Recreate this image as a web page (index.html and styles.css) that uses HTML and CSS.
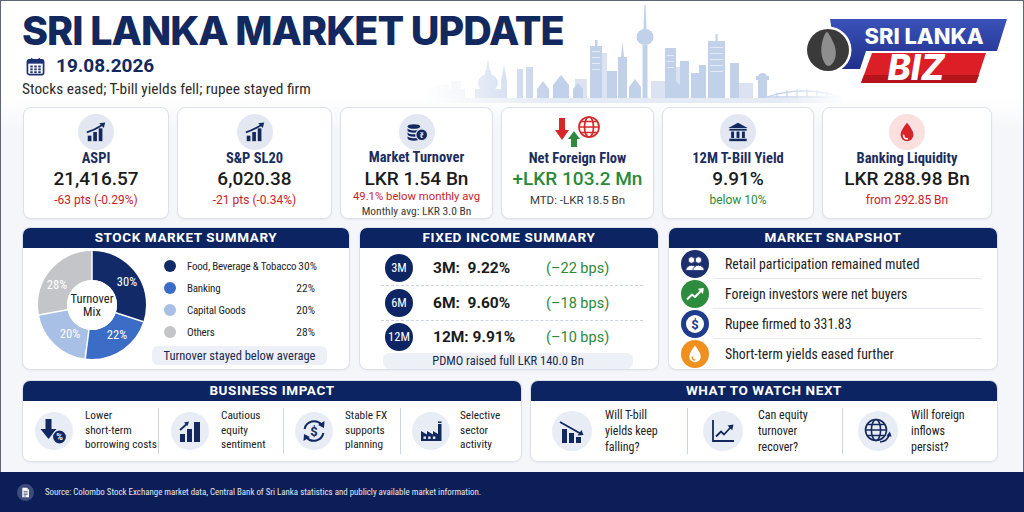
FILE: index.html
```html
<!DOCTYPE html>
<html lang="en">
<head>
<meta charset="utf-8">
<title>Sri Lanka Market Update</title>
<link rel="stylesheet" href="styles.css">
</head>
<body>
<div class="page">
  <header class="hero">
    <svg class="skyline" viewBox="0 0 420 104" aria-hidden="true">
      <defs>
        <linearGradient id="fadeG" x1="0" x2="1" y1="0" y2="0">
          <stop offset="0" stop-color="#000"/>
          <stop offset="0.3" stop-color="#fff"/>
          <stop offset="0.85" stop-color="#fff"/>
          <stop offset="1" stop-color="#000"/>
        </linearGradient>
        <mask id="fadeM"><rect width="420" height="104" fill="url(#fadeG)"/></mask>
      </defs>
      <g mask="url(#fadeM)" opacity="0.8">
        <g fill="#d3ddef">
          <rect x="0" y="88" width="40" height="12"/>
          <rect x="10" y="84" width="14" height="16"/>
          <rect x="26" y="80" width="10" height="20"/>
          <rect x="150" y="78" width="12" height="22"/>
          <rect x="226" y="80" width="14" height="20"/>
          <rect x="312" y="82" width="16" height="18"/>
          <rect x="173" y="52" width="9" height="48"/>
          <rect x="248" y="66" width="9" height="34"/>
        </g>
        <g fill="#b4c6e5">
          <rect x="50" y="88" width="26" height="12"/>
          <ellipse cx="63" cy="82" rx="10" ry="9"/>
          <rect x="60" y="70" width="6" height="6"/>
          <polygon points="61,70 65,70 63,58"/>
          <polygon points="76,100 76,80 79,64 82,80 82,100"/>
          <rect x="92" y="68" width="6" height="32"/>
          <rect x="101" y="66" width="7" height="34"/>
          <polygon points="112,100 112,88 118,80 124,88 124,100"/>
          <polygon points="128,100 128,84 136,74 144,84 144,100"/>
          <polygon points="148,100 148,88 153,82 158,88 158,100"/>
          <rect x="165" y="45" width="12" height="55"/>
          <rect x="170" y="39" width="2.5" height="7"/>
          <rect x="182" y="70" width="10" height="30"/>
          <rect x="193" y="56" width="9" height="44"/>
          <polygon points="196,56 199,56 197.5,40"/>
          <polygon points="204,100 204,86 210,78 216,86 216,100"/>
          <polygon points="219.4,4 220.6,4 221.6,30 218.4,30"/>
          <ellipse cx="220" cy="36" rx="8.5" ry="8"/>
          <rect x="217.5" y="44" width="5" height="56"/>
          <rect x="240" y="47" width="11" height="53"/>
          <rect x="255" y="60" width="9" height="40"/>
          <rect x="266" y="72" width="8" height="28"/>
          <rect x="274" y="64" width="7" height="36"/>
          <rect x="283" y="40" width="17" height="60"/>
          <rect x="290.5" y="33" width="2" height="8"/>
          <rect x="305" y="62" width="9" height="38"/>
          <polygon points="244,100 244,88 251,80 258,88 258,100"/>
          <rect x="333" y="78" width="9" height="20"/>
          <rect x="331" y="75" width="13" height="4"/>
          <ellipse cx="337.5" cy="75" rx="4" ry="3"/>
        </g>
        <g fill="#ffffff" opacity="0.55">
          <rect x="167" y="50" width="8" height="1"/><rect x="167" y="56" width="8" height="1"/><rect x="167" y="62" width="8" height="1"/><rect x="167" y="68" width="8" height="1"/>
          <rect x="285" y="46" width="13" height="1"/><rect x="285" y="52" width="13" height="1"/><rect x="285" y="58" width="13" height="1"/><rect x="285" y="64" width="13" height="1"/><rect x="285" y="70" width="13" height="1"/>
          <rect x="242" y="54" width="7" height="1"/><rect x="242" y="60" width="7" height="1"/><rect x="242" y="66" width="7" height="1"/>
        </g>
        <g fill="none" stroke="#b4c6e5" stroke-width="1.3">
          <path d="M342 96 Q 378 84 416 96"/>
          <path d="M342 96 H418"/>
          <path d="M352 96 V92 M362 96 V89 M372 96 V88 M382 96 V88 M392 96 V89 M402 96 V91"/>
        </g>
        <rect x="0" y="97" width="420" height="5" fill="#dfe7f3"/>
      </g>
    </svg>
    <div class="hero-text">
      <h1 class="title">SRI LANKA MARKET UPDATE</h1>
      <div class="date-row">
        <svg class="cal" viewBox="0 0 20 20" aria-hidden="true">
          <rect x="1.5" y="3" width="17" height="15.5" rx="2" fill="none" stroke="#1c3272" stroke-width="1.8"/>
          <rect x="1.5" y="3" width="17" height="4" fill="#1c3272"/>
          <rect x="5" y="1" width="2" height="4" rx="1" fill="#1c3272"/>
          <rect x="13" y="1" width="2" height="4" rx="1" fill="#1c3272"/>
          <g fill="#1c3272">
            <rect x="4.5" y="9" width="2.6" height="2"/><rect x="8.7" y="9" width="2.6" height="2"/><rect x="12.9" y="9" width="2.6" height="2"/>
            <rect x="4.5" y="12" width="2.6" height="2"/><rect x="8.7" y="12" width="2.6" height="2"/><rect x="12.9" y="12" width="2.6" height="2"/>
            <rect x="4.5" y="15" width="2.6" height="2"/><rect x="8.7" y="15" width="2.6" height="2"/><rect x="12.9" y="15" width="2.6" height="2"/>
          </g>
        </svg>
        <span class="date">19.08.2026</span>
      </div>
      <p class="subtitle">Stocks eased; T-bill yields fell; rupee stayed firm</p>
    </div>
    <svg class="logo" viewBox="0 0 210 76" aria-label="Sri Lanka Biz">
      <defs>
        <linearGradient id="blueG" x1="0" x2="0" y1="0" y2="1">
          <stop offset="0" stop-color="#3a52b8"/>
          <stop offset="1" stop-color="#1f2f8c"/>
        </linearGradient>
      </defs>
      <polygon points="30,5 207,5 197,37 66,37 60,55 38,55" fill="url(#blueG)"/>
      <polygon points="72,39 186,39 176,69 61,69" fill="#dc1f27"/>
      <polygon points="64,61 179,61 176,69 61,69" fill="#b5141b"/>
      <circle cx="28" cy="36" r="23.5" fill="#ffffff"/>
      <circle cx="28" cy="36" r="21" fill="#3a3a3a"/>
      <path d="M26.5 18 C 25 19.5, 23.5 23, 22.5 27 C 20.5 34, 20.5 44, 26 51 C 28 53, 31 52, 33.5 48 C 36.5 43, 36.5 36, 34 30 C 32 25, 29.5 21, 28 18.5 Z" fill="#8e8e8e"/>
      <text x="124" y="30" text-anchor="middle" textLength="119" lengthAdjust="spacingAndGlyphs" class="logo-t1">SRI LANKA</text>
      <text x="116" y="66" text-anchor="middle" class="logo-t2">BIZ</text>
    </svg>
  </header>

  <section class="kpis">
    <div class="kpi">
      <div class="kpi-icon">
        <svg viewBox="0 0 24 24" aria-hidden="true">
          <g fill="#13285e">
            <rect x="3" y="16" width="4" height="6"/>
            <rect x="9" y="12" width="4" height="10"/>
            <rect x="15" y="8" width="4" height="14"/>
            <polygon points="22,1.5 15.5,2.5 20.5,7.5"/>
          </g>
          <path d="M2 12.5 C 8 10.5, 13 8, 19.5 4" fill="none" stroke="#13285e" stroke-width="2"/>
        </svg>
      </div>
      <div class="kpi-title">ASPI</div>
      <div class="kpi-value">21,416.57</div>
      <div class="kpi-sub red">-63 pts (-0.29%)</div>
    </div>
    <div class="kpi">
      <div class="kpi-icon">
        <svg viewBox="0 0 24 24" aria-hidden="true">
          <g fill="#13285e">
            <rect x="3" y="16" width="4" height="6"/>
            <rect x="9" y="12" width="4" height="10"/>
            <rect x="15" y="8" width="4" height="14"/>
            <polygon points="22,1.5 15.5,2.5 20.5,7.5"/>
          </g>
          <path d="M2 12.5 C 8 10.5, 13 8, 19.5 4" fill="none" stroke="#13285e" stroke-width="2"/>
        </svg>
      </div>
      <div class="kpi-title">S&amp;P SL20</div>
      <div class="kpi-value">6,020.38</div>
      <div class="kpi-sub red">-21 pts (-0.34%)</div>
    </div>
    <div class="kpi dense">
      <div class="kpi-icon">
        <svg viewBox="0 0 28 24" aria-hidden="true">
          <g fill="#13285e">
            <ellipse cx="10" cy="5" rx="8" ry="3"/>
            <path d="M2 7 v3 a8 3 0 0 0 16 0 v-3 a8 3 0 0 1 -16 0z"/>
            <path d="M2 12 v3 a8 3 0 0 0 16 0 v-3 a8 3 0 0 1 -16 0z"/>
            <path d="M2 17 v3 a8 3 0 0 0 16 0 v-3 a8 3 0 0 1 -16 0z"/>
            <circle cx="20" cy="15.5" r="7.5" stroke="#e2e7f1" stroke-width="1.5"/>
          </g>
          <text x="20" y="19.2" text-anchor="middle" class="rupee">₹</text>
        </svg>
      </div>
      <div class="kpi-title">Market Turnover</div>
      <div class="kpi-value">LKR 1.54 Bn</div>
      <div class="kpi-sub red small">49.1% below monthly avg</div>
      <div class="kpi-note">Monthly avg: LKR 3.0 Bn</div>
    </div>
    <div class="kpi">
      <div class="kpi-icon plain">
        <svg viewBox="0 0 46 34" aria-hidden="true">
          <rect x="4" y="3" width="6" height="13" fill="#d62828"/>
          <polygon points="0,15 14,15 7,25" fill="#d62828"/>
          <polygon points="13,24 25,24 19,16" fill="#2c8c3c"/>
          <rect x="16" y="23" width="6" height="9" fill="#2c8c3c"/>
          <g fill="none" stroke="#d62828" stroke-width="1.7">
            <circle cx="34" cy="12" r="10"/>
            <ellipse cx="34" cy="12" rx="4.5" ry="10"/>
            <path d="M24 12 H44 M25.8 6.5 H42.2 M25.8 17.5 H42.2"/>
          </g>
        </svg>
      </div>
      <div class="kpi-title">Net Foreign Flow</div>
      <div class="kpi-value green">+LKR 103.2 Mn</div>
      <div class="kpi-sub gray">MTD: -LKR 18.5 Bn</div>
    </div>
    <div class="kpi">
      <div class="kpi-icon">
        <svg viewBox="0 0 24 24" aria-hidden="true">
          <g fill="#13285e">
            <polygon points="12,2 22.5,7.5 1.5,7.5"/>
            <rect x="2.5" y="8.5" width="19" height="2"/>
            <rect x="4.5" y="11.5" width="3.2" height="7"/>
            <rect x="10.4" y="11.5" width="3.2" height="7"/>
            <rect x="16.3" y="11.5" width="3.2" height="7"/>
            <rect x="2.5" y="19.3" width="19" height="2.7"/>
          </g>
        </svg>
      </div>
      <div class="kpi-title">12M T-Bill Yield</div>
      <div class="kpi-value">9.91%</div>
      <div class="kpi-sub green">below 10%</div>
    </div>
    <div class="kpi">
      <div class="kpi-icon pink">
        <svg viewBox="0 0 24 24" aria-hidden="true">
          <path d="M12 2 C 12 2, 5 10, 5 15 a7 7 0 0 0 14 0 C 19 10, 12 2, 12 2Z" fill="#d8232a"/>
          <path d="M8.3 15.5 a4 4 0 0 0 4 4" fill="none" stroke="#fff" stroke-width="1.8" stroke-linecap="round"/>
        </svg>
      </div>
      <div class="kpi-title">Banking Liquidity</div>
      <div class="kpi-value">LKR 288.98 Bn</div>
      <div class="kpi-sub red">from 292.85 Bn</div>
    </div>
  </section>

  <div class="mid">
    <section class="panel">
      <h2 class="panel-head">STOCK MARKET SUMMARY</h2>
      <div class="sms-body">
        <svg class="donut" viewBox="0 0 108 108" aria-hidden="true">
          <g transform="rotate(-90 54 54)" fill="none" stroke-width="29">
            <circle cx="54" cy="54" r="39.5" stroke="#122b68" stroke-dasharray="74.46 173.73"/>
            <circle cx="54" cy="54" r="39.5" stroke="#3b6cc6" stroke-dasharray="54.6 193.59" stroke-dashoffset="-74.46"/>
            <circle cx="54" cy="54" r="39.5" stroke="#a8c0e5" stroke-dasharray="49.64 198.55" stroke-dashoffset="-129.06"/>
            <circle cx="54" cy="54" r="39.5" stroke="#c3c5c9" stroke-dasharray="69.49 178.7" stroke-dashoffset="-178.7"/>
          </g>
          <g stroke="#fff" stroke-width="1.5">
            <line x1="54" y1="29" x2="54" y2="0"/>
            <line x1="77.8" y1="61.7" x2="105.4" y2="70.7"/>
            <line x1="50.9" y1="78.8" x2="47.2" y2="107.6"/>
            <line x1="29.4" y1="58.7" x2="0.9" y2="64.1"/>
          </g>
          <circle cx="54" cy="54" r="25" fill="#fff"/>
          <g class="dn-lbl">
            <text x="89" y="35">30%</text>
            <text x="79" y="88">22%</text>
            <text x="32" y="87">20%</text>
            <text x="19" y="38">28%</text>
          </g>
          <text x="54" y="52" class="dn-center">Turnover</text>
          <text x="54" y="65" class="dn-center">Mix</text>
        </svg>
        <div class="legend">
          <div class="lg-row"><span class="dot c1"></span><span class="lg-name">Food, Beverage &amp; Tobacco</span><span class="lg-pct">30%</span></div>
          <div class="lg-row"><span class="dot c2"></span><span class="lg-name">Banking</span><span class="lg-pct">22%</span></div>
          <div class="lg-row"><span class="dot c3"></span><span class="lg-name">Capital Goods</span><span class="lg-pct">20%</span></div>
          <div class="lg-row"><span class="dot c4"></span><span class="lg-name">Others</span><span class="lg-pct">28%</span></div>
          <div class="pill sms-pill">Turnover stayed below average</div>
        </div>
      </div>
    </section>

    <section class="panel">
      <h2 class="panel-head">FIXED INCOME SUMMARY</h2>
      <div class="fi-body">
        <div class="fi-row"><span class="badge">3M</span><span class="fi-val">3M:&nbsp;&nbsp;9.22%</span><span class="fi-bps">(–22 bps)</span></div>
        <div class="fi-row"><span class="badge">6M</span><span class="fi-val">6M:&nbsp;&nbsp;9.60%</span><span class="fi-bps">(–18 bps)</span></div>
        <div class="fi-row last"><span class="badge">12M</span><span class="fi-val">12M:&nbsp;9.91%</span><span class="fi-bps">(–10 bps)</span></div>
        <div class="pill fi-pill">PDMO raised full LKR 140.0 Bn</div>
      </div>
    </section>

    <section class="panel">
      <h2 class="panel-head">MARKET SNAPSHOT</h2>
      <div class="ms-body">
        <div class="ms-row">
          <svg class="ms-icon" viewBox="0 0 28 28" aria-hidden="true">
            <circle cx="14" cy="14" r="14" fill="#1c2e6e"/>
            <g fill="#fff" stroke="#1c2e6e" stroke-width="0.8">
              <circle cx="10.5" cy="10" r="3.2"/>
              <circle cx="17.5" cy="10" r="3.2"/>
              <path d="M4.8 20.5 a5.7 5.2 0 0 1 11.4 0 z"/>
              <path d="M11.8 20.5 a5.7 5.2 0 0 1 11.4 0 z"/>
            </g>
          </svg>
          <div class="ms-text">Retail participation remained muted</div>
        </div>
        <div class="ms-row">
          <svg class="ms-icon" viewBox="0 0 28 28" aria-hidden="true">
            <circle cx="14" cy="14" r="14" fill="#2e8c3e"/>
            <polyline points="6,19.5 11,14.5 14,17 20.5,10.2" fill="none" stroke="#fff" stroke-width="2" stroke-linejoin="round"/>
            <polygon points="22.8,8 16.8,8.8 22,14" fill="#fff"/>
          </svg>
          <div class="ms-text">Foreign investors were net buyers</div>
        </div>
        <div class="ms-row">
          <svg class="ms-icon" viewBox="0 0 28 28" aria-hidden="true">
            <circle cx="14" cy="14" r="14" fill="#1f3b8e"/>
            <circle cx="14" cy="14" r="9" fill="#fff"/>
            <text x="14" y="18.6" text-anchor="middle" class="dollar">$</text>
          </svg>
          <div class="ms-text">Rupee firmed to 331.83</div>
        </div>
        <div class="ms-row last">
          <svg class="ms-icon" viewBox="0 0 28 28" aria-hidden="true">
            <circle cx="14" cy="14" r="14" fill="#f0901f"/>
            <path d="M14 5.5 C14 5.5 8.3 12.5 8.3 16.5 a5.7 5.7 0 0 0 11.4 0 C19.7 12.5 14 5.5 14 5.5Z" fill="#fff"/>
            <path d="M11.2 17 a3 3 0 0 0 2.6 3" fill="none" stroke="#f0901f" stroke-width="1.3" stroke-linecap="round"/>
          </svg>
          <div class="ms-text">Short-term yields eased further</div>
        </div>
      </div>
    </section>
  </div>

  <div class="bottom">
    <section class="panel">
      <h2 class="panel-head">BUSINESS IMPACT</h2>
      <div class="strip">
        <div class="imp i1">
          <svg class="imp-icon" viewBox="0 0 38 38" aria-hidden="true">
            <g fill="#13285e">
              <rect x="10.5" y="7" width="6" height="11"/>
              <polygon points="5.5,17 21.5,17 13.5,27"/>
              <circle cx="24.5" cy="25" r="7" stroke="#e8ecf5" stroke-width="1.2"/>
            </g>
            <text x="24.5" y="28.3" text-anchor="middle" class="pct">%</text>
          </svg>
          <div class="imp-text">Lower<br>short-term<br>borrowing costs</div>
        </div>
        <div class="imp i2">
          <svg class="imp-icon" viewBox="0 0 38 38" aria-hidden="true">
            <g fill="#13285e">
              <rect x="9" y="22" width="5" height="8"/>
              <rect x="16" y="17" width="5" height="13"/>
              <rect x="23" y="10" width="6" height="20"/>
              <polygon points="18,9.5 13,10.5 16.5,14"/>
            </g>
            <path d="M9 18 L15.5 12.3" stroke="#13285e" stroke-width="1.8"/>
          </svg>
          <div class="imp-text">Cautious<br>equity<br>sentiment</div>
        </div>
        <div class="imp i3">
          <svg class="imp-icon" viewBox="0 0 38 38" aria-hidden="true">
            <g fill="none" stroke="#13285e" stroke-width="2">
              <path d="M9.6 17 A9.8 9.8 0 0 1 26.5 12.5"/>
              <path d="M28.4 21 A9.8 9.8 0 0 1 11.5 25.5"/>
            </g>
            <g fill="#13285e">
              <polygon points="29.5,9 29,16 23,13"/>
              <polygon points="8.5,29 9,22 15,25"/>
            </g>
            <text x="19" y="23.8" text-anchor="middle" class="usd">$</text>
          </svg>
          <div class="imp-text">Stable FX<br>supports<br>planning</div>
        </div>
        <div class="imp i4">
          <svg class="imp-icon" viewBox="0 0 38 38" aria-hidden="true">
            <path d="M9 29 V19 L15 22.5 V19 L21 22.5 V19 L26 22 V12 H29.5 V29 Z" fill="#13285e"/>
            <rect x="26" y="9.5" width="3.5" height="1.5" fill="#13285e"/>
            <g fill="#e8ecf5">
              <rect x="11.5" y="24.5" width="2.4" height="2.4"/>
              <rect x="16.2" y="24.5" width="2.4" height="2.4"/>
              <rect x="20.9" y="24.5" width="2.4" height="2.4"/>
            </g>
          </svg>
          <div class="imp-text">Selective<br>sector<br>activity</div>
        </div>
      </div>
    </section>

    <section class="panel">
      <h2 class="panel-head">WHAT TO WATCH NEXT</h2>
      <div class="strip">
        <div class="watch w1">
          <svg class="imp-icon big" viewBox="0 0 40 40" aria-hidden="true">
            <g fill="#13285e">
              <rect x="10" y="18" width="5" height="14"/>
              <rect x="17" y="22" width="5" height="10"/>
              <rect x="24" y="26" width="5" height="6"/>
              <polygon points="31.5,24 25.5,24.5 29.5,19"/>
            </g>
            <path d="M8 11 L28 22.3" stroke="#13285e" stroke-width="1.8"/>
          </svg>
          <div class="imp-text watch-text">Will T-bill<br>yields keep<br>falling?</div>
        </div>
        <div class="watch w2">
          <svg class="imp-icon big" viewBox="0 0 40 40" aria-hidden="true">
            <path d="M10 9 V30 H31" fill="none" stroke="#13285e" stroke-width="1.8"/>
            <polyline points="13,25.5 18,20.5 21,23.5 27.5,16.5" fill="none" stroke="#13285e" stroke-width="1.8"/>
            <polygon points="30.5,13.5 24.5,14.5 29.2,19.2" fill="#13285e"/>
          </svg>
          <div class="imp-text watch-text">Can equity<br>turnover<br>recover?</div>
        </div>
        <div class="watch w3">
          <svg class="imp-icon big" viewBox="0 0 40 40" aria-hidden="true">
            <g fill="none" stroke="#13285e" stroke-width="1.6">
              <circle cx="18" cy="19" r="10.5"/>
              <ellipse cx="18" cy="19" rx="4.6" ry="10.5"/>
              <path d="M7.5 19 H28.5 M9.2 13.5 H26.8 M9.2 24.5 H26.8"/>
              <path d="M22 31 C 27 30.5, 30 28, 31 24"/>
            </g>
            <polygon points="31.8,20.5 28.3,25.2 33.6,25.6" fill="#13285e"/>
          </svg>
          <div class="imp-text watch-text">Will foreign<br>inflows<br>persist?</div>
        </div>
      </div>
    </section>
  </div>
</div>

<footer class="footer">
  <svg class="doc" viewBox="0 0 17 17" aria-hidden="true">
    <circle cx="8.5" cy="8.5" r="8.5" fill="#3d4c7c"/>
    <path d="M5.3 3.8 H9.8 L12 6 V13.2 H5.3 Z" fill="#fff"/>
    <path d="M9.8 3.8 V6 H12" fill="#c9d1e6"/>
    <g stroke="#3d4c7c" stroke-width="0.8">
      <path d="M6.6 7.4 H10.7 M6.6 9 H10.7 M6.6 10.6 H10.7 M6.6 12 H9"/>
    </g>
  </svg>
  <p class="source">Source: Colombo Stock Exchange market data, Central Bank of Sri Lanka statistics and publicly available market information.</p>
</footer>
</body>
</html>
```

FILE: styles.css
```css
* { box-sizing: border-box; }

html, body {
  margin: 0;
  padding: 0;
}

body {
  width: 1024px;
  height: 512px;
  overflow: hidden;
  background: #f5f6f9;
  font-family: Roboto, "Liberation Sans", sans-serif;
  color: #1b1b1b;
}

.page {
  height: 472px;
  border: 1px solid #5f6679;
  border-bottom: 0;
  padding: 0 25px 0 21px;
  display: flex;
  flex-direction: column;
  background: linear-gradient(#ffffff 0, #ffffff 96px, #f5f6f9 130px);
}

/* ---------- hero ---------- */
.hero {
  position: relative;
  height: 106px;
  display: flex;
  justify-content: space-between;
  flex-shrink: 0;
}

.skyline {
  position: absolute;
  left: 403px;
  top: 0;
  width: 420px;
  height: 104px;
}

.hero-text {
  position: relative;
  padding-top: 10px;
}

.title {
  margin: 0;
  font-family: Inter, "Liberation Sans", sans-serif;
  font-weight: 800;
  font-size: 39.5px;
  line-height: 40px;
  letter-spacing: -1px;
  color: #13285e;
  white-space: nowrap;
}

.date-row {
  display: flex;
  align-items: center;
  gap: 11px;
  margin-top: 3px;
  height: 24px;
  padding-left: 4px;
}

.cal {
  width: 19px;
  height: 19px;
}

.date {
  font-family: Roboto, sans-serif;
  font-weight: 700;
  font-size: 19px;
  line-height: 24px;
  color: #13285e;
}

.subtitle {
  margin: 3px 0 0;
  font-family: "Liberation Sans Narrow", "Roboto Condensed", Roboto, sans-serif;
  font-size: 15.4px;
  line-height: 16px;
  color: #2b2b2b;
  white-space: nowrap;
}

.logo {
  position: relative;
  width: 210px;
  height: 76px;
  margin-top: 13px;
  margin-right: -12px;
}

.logo-t1 {
  font-family: Inter, "Liberation Sans", sans-serif;
  font-weight: 800;
  font-size: 21px;
  fill: #ffffff;
}

.logo-t2 {
  font-family: Inter, "Liberation Sans", sans-serif;
  font-weight: 800;
  font-style: italic;
  font-size: 35px;
  fill: #ffffff;
}

/* ---------- KPI cards ---------- */
.kpis {
  display: grid;
  grid-template-columns: 146px 155px 153px 153px 152px 170px;
  column-gap: 8px;
  height: 111px;
  margin-left: 1px;
  flex-shrink: 0;
}

.kpi {
  background: #ffffff;
  border: 1px solid #dde2ea;
  border-radius: 8px;
  box-shadow: 0 1px 2px rgba(20, 40, 90, 0.06);
  display: flex;
  flex-direction: column;
  align-items: center;
  padding-top: 6px;
}

.kpi-icon {
  width: 36px;
  height: 36px;
  border-radius: 50%;
  background: #e2e7f1;
  display: flex;
  align-items: center;
  justify-content: center;
}

.kpi-icon svg {
  width: 22px;
  height: 22px;
}

.kpi-icon.plain {
  width: 46px;
  background: none;
}

.kpi-icon.plain svg {
  width: 46px;
  height: 34px;
}

.kpi-icon.pink {
  background: #fbe0e0;
}

.rupee {
  font-family: "Noto Sans", "DejaVu Sans", sans-serif;
  font-size: 10px;
  font-weight: 700;
  fill: #ffffff;
}

.kpi-title {
  font-family: "Liberation Sans Narrow", "Roboto Condensed", Roboto, sans-serif;
  font-weight: 700;
  font-size: 14.5px;
  line-height: 18px;
  color: #1c2d5e;
  white-space: nowrap;
}

.kpi-value {
  font-family: Roboto, sans-serif;
  font-weight: 500;
  font-size: 19px;
  line-height: 22px;
  color: #1b1b1b;
  white-space: nowrap;
}

.kpi-sub {
  margin-top: 2px;
  font-family: Roboto, sans-serif;
  font-size: 12px;
  line-height: 16px;
  white-space: nowrap;
}

.kpi.dense .kpi-title { line-height: 16px; }
.kpi.dense .kpi-value { margin-top: 2px; }
.kpi.dense .kpi-sub { margin-top: 0; line-height: 14px; }

.kpi-sub.small { font-size: 11.3px; }

.kpi-note {
  margin-top: 1px;
  font-family: "Liberation Sans Narrow", "Roboto Condensed", Roboto, sans-serif;
  font-size: 11.5px;
  line-height: 13px;
  color: #3a3a3a;
  white-space: nowrap;
}

.red { color: #cc2229; }
.green { color: #2b8a3a; }
.gray { color: #3a3a3a; font-size: 11.5px; }
.kpi-value.green { color: #2b8a3a; }

/* ---------- panels ---------- */
.mid {
  display: grid;
  grid-template-columns: 328px 300px 330px;
  column-gap: 9px;
  margin-top: 9px;
  height: 143px;
  flex-shrink: 0;
}

.bottom {
  display: grid;
  grid-template-columns: 500px 468px;
  column-gap: 8px;
  margin-top: 10px;
  height: 82px;
  flex-shrink: 0;
}

.panel {
  background: #ffffff;
  border: 1px solid #dde2ea;
  border-radius: 8px;
  overflow: hidden;
  display: flex;
  flex-direction: column;
  box-shadow: 0 1px 2px rgba(20, 40, 90, 0.05);
}

.panel-head {
  margin: -1px -1px 0;
  height: 21px;
  background: #0c2461;
  color: #ffffff;
  font-family: Roboto, sans-serif;
  font-weight: 700;
  font-size: 13.5px;
  line-height: 21px;
  letter-spacing: 0.6px;
  text-align: center;
  flex-shrink: 0;
}

/* stock market summary */
.sms-body {
  display: flex;
  align-items: flex-start;
  padding-left: 15px;
  flex: 1;
}

.donut {
  width: 108px;
  height: 108px;
  margin-top: 3px;
  flex-shrink: 0;
}

.dn-lbl text {
  font-family: "Liberation Sans Narrow", "Roboto Condensed", Roboto, sans-serif;
  font-size: 12.5px;
  fill: #ffffff;
  text-anchor: middle;
}

.dn-center {
  font-family: "Liberation Sans Narrow", "Roboto Condensed", Roboto, sans-serif;
  font-size: 12.5px;
  fill: #222222;
  text-anchor: middle;
}

.legend {
  margin-left: 6px;
  width: 175px;
  padding-top: 7px;
  display: flex;
  flex-direction: column;
}

.lg-row {
  display: flex;
  align-items: center;
  height: 22px;
  padding: 0 12px;
  font-family: "Liberation Sans Narrow", "Roboto Condensed", Roboto, sans-serif;
  font-size: 11px;
  color: #1f1f1f;
}

.dot {
  width: 12px;
  height: 12px;
  border-radius: 50%;
  flex-shrink: 0;
  margin-right: 11px;
}

.c1 { background: #122b68; }
.c2 { background: #3b6cc6; }
.c3 { background: #a8c0e5; }
.c4 { background: #c3c5c9; }

.lg-name {
  flex: 1;
  white-space: nowrap;
  letter-spacing: -0.2px;
}

.lg-pct {
  margin-left: 2px;
  font-size: 11.5px;
}

.pill {
  background: #edf0f7;
  border-radius: 6px;
  text-align: center;
  font-family: "Liberation Sans Narrow", "Roboto Condensed", Roboto, sans-serif;
  color: #1a2850;
  white-space: nowrap;
}

.sms-pill {
  margin-top: 3px;
  height: 19px;
  line-height: 19px;
  font-size: 12.5px;
}

/* fixed income */
.fi-body {
  flex: 1;
  padding: 3px 15px 0 21px;
  display: flex;
  flex-direction: column;
}

.fi-row {
  display: flex;
  align-items: center;
  height: 35px;
  flex-shrink: 0;
  border-bottom: 1px dashed #cdd3de;
}

.fi-row.last {
  height: 32px;
  border-bottom: 0;
}

.badge {
  width: 28px;
  height: 28px;
  margin-left: 4px;
  border-radius: 50%;
  background: #0e2563;
  color: #ffffff;
  font-family: "Liberation Sans Narrow", "Roboto Condensed", Roboto, sans-serif;
  font-size: 12.5px;
  line-height: 28px;
  text-align: center;
  flex-shrink: 0;
}

.fi-val {
  width: 113px;
  margin-left: 20px;
  font-family: Roboto, sans-serif;
  font-weight: 700;
  font-size: 15.5px;
  color: #1b1b1b;
  white-space: nowrap;
}

.fi-bps {
  font-family: Roboto, sans-serif;
  font-size: 14.5px;
  color: #2b8a3a;
  white-space: nowrap;
}

.fi-pill {
  margin: 0 10px 0 2px;
  height: 16px;
  line-height: 16px;
  font-size: 12.5px;
  flex-shrink: 0;
}

/* market snapshot */
.ms-body {
  flex: 1;
  padding: 1px 15px 0 12px;
  display: flex;
  flex-direction: column;
}

.ms-row {
  display: flex;
  align-items: center;
  height: 30px;
  flex-shrink: 0;
}

.ms-icon {
  width: 28px;
  height: 28px;
  flex-shrink: 0;
}

.dollar {
  font-family: Roboto, sans-serif;
  font-weight: 700;
  font-size: 13px;
  fill: #1f3b8e;
}

.ms-text {
  flex: 1;
  height: 100%;
  margin-left: 4px;
  padding-left: 12px;
  display: flex;
  align-items: center;
  border-bottom: 1px solid #e5e8ee;
  font-family: "Liberation Sans Narrow", "Roboto Condensed", Roboto, sans-serif;
  font-size: 13.8px;
  color: #222222;
  white-space: nowrap;
}

.ms-row.last .ms-text {
  border-bottom: 0;
}

/* strips: business impact, what to watch */
.strip {
  flex: 1;
  display: flex;
  align-items: center;
}

.imp, .watch {
  display: flex;
  align-items: center;
  height: 46px;
  gap: 12px;
}

.imp.i1 { width: 135px; padding-left: 12px; }
.imp.i2 { width: 125px; padding-left: 12px; border-left: 1px solid #cfd5df; }
.imp.i3 { width: 117px; padding-left: 11px; border-left: 1px solid #cfd5df; }
.imp.i4 { flex: 1; padding-left: 11px; border-left: 1px solid #cfd5df; gap: 10px; }

.watch.w1 { width: 156px; padding-left: 21px; gap: 13px; }
.watch.w2 { width: 155px; padding-left: 15px; gap: 15px; border-left: 1px solid #cfd5df; }
.watch.w3 { flex: 1; padding-left: 15px; gap: 13px; border-left: 1px solid #cfd5df; }

.imp-icon {
  width: 38px;
  height: 38px;
  border-radius: 50%;
  background: #e8ecf5;
  flex-shrink: 0;
}

.imp-icon.big {
  width: 40px;
  height: 40px;
}

.pct {
  font-family: Roboto, sans-serif;
  font-weight: 700;
  font-size: 9px;
  fill: #ffffff;
}

.usd {
  font-family: Roboto, sans-serif;
  font-weight: 700;
  font-size: 13px;
  fill: #13285e;
}

.imp-text {
  font-family: "Liberation Sans Narrow", "Roboto Condensed", Roboto, sans-serif;
  font-size: 11.3px;
  line-height: 14.5px;
  color: #222222;
  white-space: nowrap;
}

.watch-text {
  font-size: 12px;
  line-height: 16px;
}

/* ---------- footer ---------- */
.footer {
  height: 40px;
  background: #0b1f56;
  display: flex;
  align-items: center;
  padding-left: 17px;
  gap: 11px;
}

.doc {
  width: 17px;
  height: 17px;
  flex-shrink: 0;
}

.source {
  margin: 0;
  font-family: "Liberation Sans Narrow", "Roboto Condensed", Roboto, sans-serif;
  font-size: 8.9px;
  color: #e3e8f4;
  white-space: nowrap;
}
```
